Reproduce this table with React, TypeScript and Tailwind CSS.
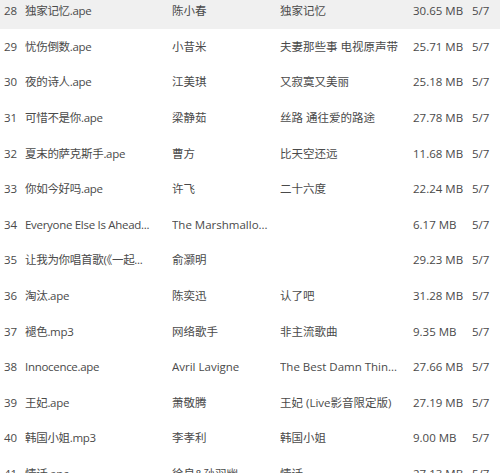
import React from 'react';

type Track = {
  no: number;
  name: string;
  artist: string;
  album: string;
  size: string;
  rating: string;
};

const tracks: Track[] = [
  { no: 28, name: '独家记忆.ape', artist: '陈小春', album: '独家记忆', size: '30.65 MB', rating: '5/7' },
  { no: 29, name: '忧伤倒数.ape', artist: '小昔米', album: '夫妻那些事 电视原声带', size: '25.71 MB', rating: '5/7' },
  { no: 30, name: '夜的诗人.ape', artist: '江美琪', album: '又寂寞又美丽', size: '25.18 MB', rating: '5/7' },
  { no: 31, name: '可惜不是你.ape', artist: '梁静茹', album: '丝路 通往爱的路途', size: '27.78 MB', rating: '5/7' },
  { no: 32, name: '夏末的萨克斯手.ape', artist: '曹方', album: '比天空还远', size: '11.68 MB', rating: '5/7' },
  { no: 33, name: '你如今好吗.ape', artist: '许飞', album: '二十六度', size: '22.24 MB', rating: '5/7' },
  { no: 34, name: 'Everyone Else Is Ahead...', artist: 'The Marshmallo...', album: '', size: '6.17 MB', rating: '5/7' },
  { no: 35, name: '让我为你唱首歌(《一起...', artist: '俞灏明', album: '', size: '29.23 MB', rating: '5/7' },
  { no: 36, name: '淘汰.ape', artist: '陈奕迅', album: '认了吧', size: '31.28 MB', rating: '5/7' },
  { no: 37, name: '褪色.mp3', artist: '网络歌手', album: '非主流歌曲', size: '9.35 MB', rating: '5/7' },
  { no: 38, name: 'Innocence.ape', artist: 'Avril Lavigne', album: 'The Best Damn Thin...', size: '27.66 MB', rating: '5/7' },
  { no: 39, name: '王妃.ape', artist: '萧敬腾', album: '王妃 (Live影音限定版)', size: '27.19 MB', rating: '5/7' },
  { no: 40, name: '韩国小姐.mp3', artist: '李孝利', album: '韩国小姐', size: '9.00 MB', rating: '5/7' },
  { no: 41, name: '情话.ape', artist: '徐良&孙羽幽', album: '情话', size: '27.13 MB', rating: '5/7' },
];

function TrackRow({ track, active }: { track: Track; active: boolean }) {
  return (
    <div className={`flex h-[35.6px] items-center whitespace-nowrap ${active ? 'bg-[#f0f0f0]' : ''}`}>
      <span className="w-[25px] shrink-0 pl-[4px]">{track.no}</span>
      <span className="w-[147px] shrink-0 tracking-[-0.3px]">{track.name}</span>
      <span className="w-[108px] shrink-0 overflow-hidden">{track.artist}</span>
      <span className="w-[133px] shrink-0 overflow-hidden">{track.album}</span>
      <span className="w-[59px] shrink-0">{track.size}</span>
      <span className="shrink-0">{track.rating}</span>
    </div>
  );
}

export default function App() {
  return (
    <div className="h-[473px] w-[500px] overflow-hidden bg-white text-[11.5px] text-[#4a4a4a] [font-family:'Open_Sans','Noto_Sans_CJK_SC',sans-serif]">
      <div className="-mt-[7px]">
        {tracks.map((t, i) => (
          <TrackRow key={t.no} track={t} active={i === 0} />
        ))}
      </div>
    </div>
  );
}
